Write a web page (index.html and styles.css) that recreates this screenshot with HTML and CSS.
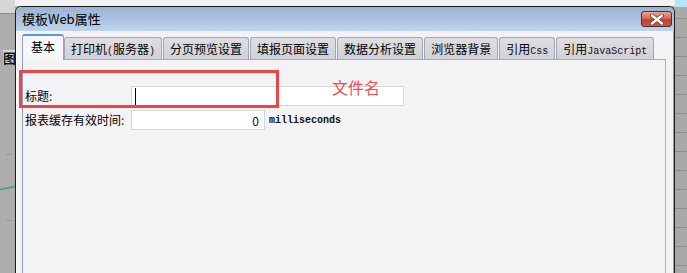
FILE: index.html
```html
<!DOCTYPE html>
<html lang="zh-CN">
<head>
    <meta charset="UTF-8">
    <title>模板Web属性</title>
    <link rel="stylesheet" href="styles.css">
</head>
<body>
    <div class="desk">
        <!-- Fondo a la izquierda (ventana de atrás) -->
        <div class="side-left">
            <svg width="15" height="273" viewBox="0 0 15 273">
                <rect x="0" y="0" width="15" height="13" fill="#d6d6d6"/>
                <line x1="0" y1="13.5" x2="15" y2="13.5" stroke="#8c8c8c"/>
                <rect x="3" y="50" width="12" height="15" fill="#d8d8d8"/>
                <text x="3" y="63" font-size="13" font-weight="bold" fill="#111" font-family="Noto Sans CJK SC, sans-serif">图</text>
                <line x1="6" y1="154.5" x2="12" y2="154.5" stroke="#999"/>
                <line x1="6" y1="220.5" x2="12" y2="220.5" stroke="#999"/>
                <line x1="0" y1="189.5" x2="15" y2="186.5" stroke="#3f9a7c" stroke-width="1.5"/>
            </svg>
        </div>

        <!-- Ventana de diálogo -->
        <div class="window">
            <div class="titlebar">
                <span class="title">模板Web属性</span>
                <div class="close-btn">
                    <svg width="14" height="11" viewBox="0 0 14 11">
                        <path d="M2 1.5 L12 9.5 M12 1.5 L2 9.5" stroke="#6a3a34" stroke-width="4" stroke-linecap="round"/>
                        <path d="M2 1.5 L12 9.5 M12 1.5 L2 9.5" stroke="#fff" stroke-width="2.4" stroke-linecap="round"/>
                    </svg>
                </div>
            </div>

            <div class="window-body">
                <div class="tabs">
                    <div class="tab active">基本</div>
                    <div class="tab">打印机<span class="lat">(</span>服务器<span class="lat">)</span></div>
                    <div class="tab">分页预览设置</div>
                    <div class="tab">填报页面设置</div>
                    <div class="tab">数据分析设置</div>
                    <div class="tab">浏览器背景</div>
                    <div class="tab">引用<span class="lat">Css</span></div>
                    <div class="tab">引用<span class="lat">JavaScript</span></div>
                </div>

                <div class="panel">
                    <div class="form-row">
                        <label class="lbl">标题<span class="colon">:</span></label>
                        <div class="field wide"><span class="caret"></span></div>
                    </div>
                    <div class="form-row">
                        <label class="lbl">报表缓存有效时间<span class="colon">:</span></label>
                        <div class="field narrow num">0</div>
                        <span class="unit">milliseconds</span>
                    </div>
                </div>
            </div>
        </div>

        <!-- Fondo a la derecha -->
        <div class="side-right"></div>
    </div>

    <!-- Anotaciones en rojo sobre la captura -->
    <div class="mark-box"></div>
    <div class="mark-text">文件名</div>
</body>
</html>
```

FILE: styles.css
```css
html, body {
    margin: 0;
    padding: 0;
}

body {
    width: 687px;
    height: 273px;
    overflow: hidden;
    position: relative;
    background: #adadad;
    font-family: "Noto Sans CJK SC", sans-serif;
    font-size: 12px;
    color: #000;
}

.desk {
    display: flex;
    height: 273px;
    background: linear-gradient(#f3f3f3 0 6px, transparent 6px);
}

.side-left {
    width: 15px;
    flex: none;
    background: #adadad;
}

.side-left svg {
    display: block;
}

.side-right {
    width: 12px;
    flex: none;
    background:
        linear-gradient(#b6e6f5 0 7px, transparent 7px),
        repeating-linear-gradient(to bottom, #a9a9a9 0 18px, #8e8e8e 18px 19px);
}

/* Ventana */
.window {
    width: 660px;
    flex: none;
    margin-top: 6px;
    box-sizing: border-box;
    border: 1px solid #1c1c1c;
    border-bottom: none;
    border-radius: 6px 6px 0 0;
    background: #f3f3f6;
    box-shadow: inset 1px 0 #ffffff, inset -1px 0 #5fb4e6;
    display: flex;
    flex-direction: column;
    overflow: hidden;
}

.titlebar {
    height: 24px;
    flex: none;
    display: flex;
    align-items: flex-start;
    justify-content: space-between;
    padding: 0 2px 0 6px;
    background: linear-gradient(#9ab2d3, #bed3ec);
}

.title {
    font-size: 13px;
    line-height: 24px;
    color: #000;
}

.close-btn {
    width: 31px;
    height: 16px;
    margin-top: 4px;
    box-sizing: border-box;
    border: 1px solid #5c2a26;
    border-radius: 3px;
    background: linear-gradient(#e9a698 0%, #d86a58 45%, #c2412f 55%, #c95a46 100%);
    display: flex;
    align-items: center;
    justify-content: center;
}

.close-btn svg {
    display: block;
}

.window-body {
    flex: 1;
    padding: 6px 8px 0 6px;
    display: flex;
    flex-direction: column;
}

/* Pestañas */
.tabs {
    height: 22px;
    display: flex;
    align-items: flex-end;
    gap: 1px;
    position: relative;
    z-index: 1;
}

.tab {
    height: 22px;
    box-sizing: border-box;
    padding: 0 6px;
    border: 1px solid #9ea7b3;
    border-bottom: none;
    border-radius: 3px 3px 0 0;
    background: linear-gradient(#dedee2, #d0d1d6);
    line-height: 21px;
    white-space: nowrap;
}

.tab.active {
    height: 26px;
    margin-bottom: -1px;
    margin-right: -1px;
    padding: 0 8px;
    border-color: #8fa2c2;
    border-top: 2px solid #5a98e2;
    background: #f7f7fa;
    line-height: 22px;
}

.lat {
    font-family: "Liberation Mono", monospace;
    font-size: 10px;
    color: #111;
}

/* Panel del formulario */
.panel {
    flex: 1;
    width: 644px;
    box-sizing: border-box;
    border: 1px solid #a5acb8;
    border-left-color: #8d9dbf;
    border-bottom: none;
    background: #f3f3f6;
    padding: 26px 0 0 2px;
}

.form-row {
    display: flex;
    align-items: center;
    height: 20px;
    margin-bottom: 4px;
}

.lbl {
    width: 106px;
    flex: none;
    line-height: 20px;
}

.colon {
    color: #6a0a4a;
}

.field {
    height: 20px;
    box-sizing: border-box;
    border: 1px solid #d6d6d6;
    background: #fff;
    display: flex;
    align-items: center;
}

.field.wide {
    width: 273px;
}

.field.narrow {
    width: 134px;
}

.field.num {
    justify-content: flex-end;
    padding-right: 5px;
    color: #101040;
}

.caret {
    width: 1px;
    height: 17px;
    margin-left: 3px;
    background: #000;
}

.unit {
    margin-left: 4px;
    font-family: "Liberation Mono", monospace;
    font-size: 10px;
    font-weight: bold;
    color: #111;
}

/* Anotaciones */
.mark-box {
    position: absolute;
    left: 19px;
    top: 70px;
    width: 260px;
    height: 38px;
    box-sizing: border-box;
    border: 3px solid #f04444;
}

.mark-text {
    position: absolute;
    left: 332px;
    top: 78px;
    font-size: 16px;
    line-height: 18px;
    color: #f24e4e;
}
```
